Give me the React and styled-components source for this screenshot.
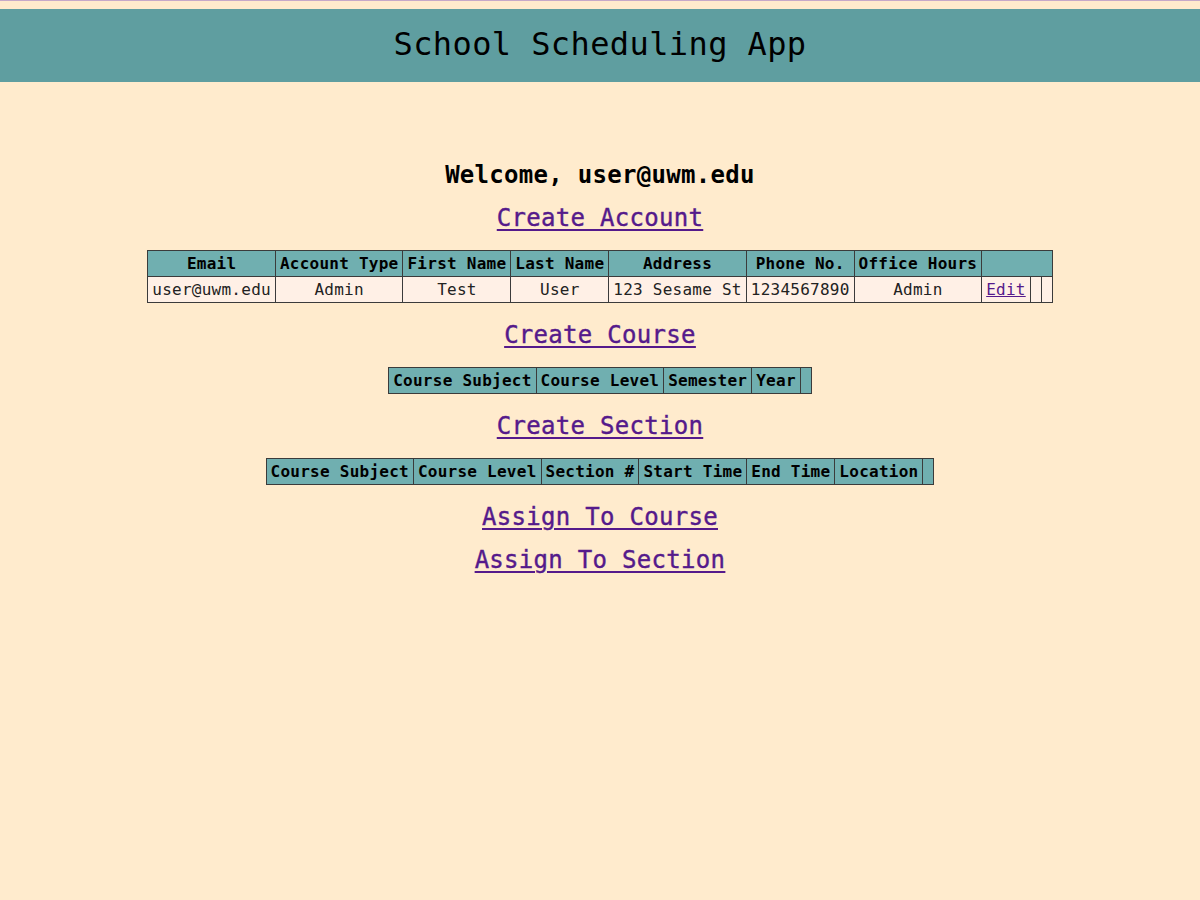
import React from "react";
import styled, { createGlobalStyle } from "styled-components";

const Global = createGlobalStyle`
  html {
    border-top: 1px solid #c6a9c8;
    background: #ffebcd;
  }
  body {
    margin: 8px 0 0;
    background: #ffebcd;
    font-family: "DejaVu Sans Mono", "Liberation Mono", monospace;
    color: #000;
  }
`;

const Header = styled.header`
  height: 73px;
  background: #5f9ea0;
  display: flex;
  align-items: center;
  justify-content: center;
`;

const Title = styled.h1`
  margin: 0 0 3px;
  font-size: 32px;
  font-weight: normal;
  letter-spacing: 0.4px;
  line-height: 40px;
`;

const Main = styled.main`
  display: flex;
  flex-direction: column;
  align-items: center;
  gap: 15px;
  padding-top: 79px;
`;

const Welcome = styled.h2`
  margin: 0;
  font-size: 24px;
  line-height: 28px;
  font-weight: bold;
  letter-spacing: 0.3px;
`;

const NavLink = styled.a`
  display: block;
  font-size: 24px;
  line-height: 28px;
  font-weight: normal;
  letter-spacing: 0.3px;
  color: #551a8b;
  text-decoration: underline;
  text-decoration-thickness: 2px;
  text-underline-offset: 3px;
  -webkit-text-stroke: 0.4px #551a8b;
`;

const Table = styled.table`
  border-collapse: collapse;
  margin: 3px 0;
  font-size: 16px;
  line-height: 19px;
  letter-spacing: 0.25px;
  border: 1px solid #8c8c8c;
`;

const HeadRow = styled.tr`
  background: #70afb0;
`;

const BodyRow = styled.tr`
  background: #fff0e6;
  color: #222;
`;

const Th = styled.th`
  padding: 3px 4px;
  border: 1px solid #3b3b3b;
  font-weight: bold;
  white-space: nowrap;
  text-align: ${(p) => (p.$left ? "left" : "center")};
  ${(p) => (p.$empty ? "width: 2px;" : "")}
`;

const Td = styled.td`
  padding: 3px 4px;
  border: 1px solid #3b3b3b;
  white-space: nowrap;
  text-align: ${(p) => (p.$left ? "left" : "center")};
  ${(p) => (p.$empty ? "width: 2px;" : "")}
`;

const EditLink = styled.a`
  color: #551a8b;
  text-decoration: underline;
`;

export default function App() {
  return (
    <>
      <Global />
      <Header>
        <Title>School Scheduling App</Title>
      </Header>
      <Main>
        <Welcome>Welcome, user@uwm.edu</Welcome>
        <NavLink href="#">Create Account</NavLink>
        <Table>
          <tbody>
            <HeadRow>
              <Th>Email</Th>
              <Th>Account Type</Th>
              <Th>First Name</Th>
              <Th>Last Name</Th>
              <Th>Address</Th>
              <Th>Phone No.</Th>
              <Th>Office Hours</Th>
              <Th colSpan={3}></Th>
            </HeadRow>
            <BodyRow>
              <Td $left>user@uwm.edu</Td>
              <Td>Admin</Td>
              <Td>Test</Td>
              <Td>User</Td>
              <Td $left>123 Sesame St</Td>
              <Td $left>1234567890</Td>
              <Td>Admin</Td>
              <Td $left>
                <EditLink href="#">Edit</EditLink>
              </Td>
              <Td $empty></Td>
              <Td $empty></Td>
            </BodyRow>
          </tbody>
        </Table>
        <NavLink href="#">Create Course</NavLink>
        <Table>
          <tbody>
            <HeadRow>
              <Th $left>Course Subject</Th>
              <Th $left>Course Level</Th>
              <Th $left>Semester</Th>
              <Th $left>Year</Th>
              <Th $empty></Th>
            </HeadRow>
          </tbody>
        </Table>
        <NavLink href="#">Create Section</NavLink>
        <Table>
          <tbody>
            <HeadRow>
              <Th $left>Course Subject</Th>
              <Th $left>Course Level</Th>
              <Th $left>Section #</Th>
              <Th $left>Start Time</Th>
              <Th $left>End Time</Th>
              <Th $left>Location</Th>
              <Th $empty></Th>
            </HeadRow>
          </tbody>
        </Table>
        <NavLink href="#">Assign To Course</NavLink>
        <NavLink href="#">Assign To Section</NavLink>
      </Main>
    </>
  );
}
